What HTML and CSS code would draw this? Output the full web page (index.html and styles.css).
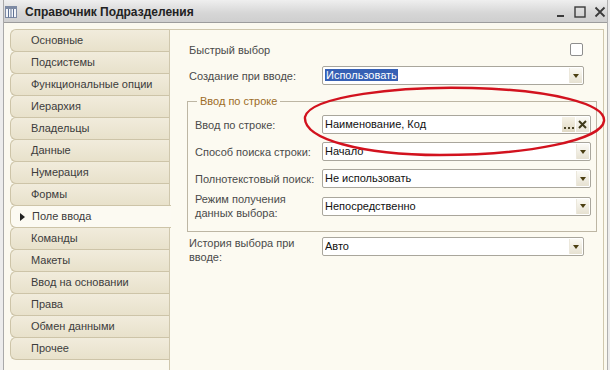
FILE: index.html
```html
<!DOCTYPE html>
<html lang="ru">
<head>
<meta charset="utf-8">
<title>Справочник Подразделения</title>
<link rel="stylesheet" href="styles.css">
</head>
<body>
<div class="window">
  <header class="titlebar">
    <svg class="app-icon" width="12" height="12" viewBox="0 0 12 12">
      <rect x="0.5" y="0.5" width="11" height="11" fill="#f4f6fa" stroke="#7d8aa3"/>
      <line x1="0.5" y1="2" x2="11.5" y2="2" stroke="#7d8aa3" stroke-width="2"/>
      <line x1="3.5" y1="3" x2="3.5" y2="11.5" stroke="#5f7294"/>
      <line x1="6" y1="3" x2="6" y2="11.5" stroke="#5f7294"/>
      <line x1="8.5" y1="3" x2="8.5" y2="11.5" stroke="#5f7294"/>
    </svg>
    <span class="title">Справочник Подразделения</span>
    <div class="controls">
      <svg class="ctl ctl-min" width="10" height="12" viewBox="0 0 10 12"><rect x="1" y="9" width="7" height="2" fill="#3a3a3a"/></svg>
      <svg class="ctl ctl-max" width="12" height="12" viewBox="0 0 12 12"><rect x="1" y="1" width="10" height="10" fill="none" stroke="#3a3a3a" stroke-width="1.4"/></svg>
      <svg class="ctl ctl-close" width="12" height="12" viewBox="0 0 12 12"><path d="M1.5 1.5 L10.5 10.5 M10.5 1.5 L1.5 10.5" stroke="#3a3a3a" stroke-width="1.8"/></svg>
    </div>
  </header>

  <div class="content">
    <nav class="tabs">
      <div class="tab">Основные</div>
      <div class="tab">Подсистемы</div>
      <div class="tab">Функциональные опции</div>
      <div class="tab">Иерархия</div>
      <div class="tab">Владельцы</div>
      <div class="tab">Данные</div>
      <div class="tab">Нумерация</div>
      <div class="tab">Формы</div>
      <div class="tab active"><span class="marker"></span>Поле ввода</div>
      <div class="tab">Команды</div>
      <div class="tab">Макеты</div>
      <div class="tab">Ввод на основании</div>
      <div class="tab">Права</div>
      <div class="tab">Обмен данными</div>
      <div class="tab">Прочее</div>
    </nav>

    <main class="panel">
      <div class="row row-quick">
        <span class="label">Быстрый выбор</span>
        <span class="checkbox"></span>
      </div>
      <div class="row row-create">
        <span class="label">Создание при вводе:</span>
        <div class="field"><span class="value"><span class="selected">Использовать</span></span><span class="dd"></span></div>
      </div>

      <section class="group">
        <div class="legend">Ввод по строке</div>
        <div class="grow">
          <span class="label">Ввод по строке:</span>
          <div class="field"><span class="value">Наименование, Код</span><span class="btn-dots"><i></i><i></i><i></i></span><span class="btn-clear"><svg width="9" height="9" viewBox="0 0 9 9"><path d="M1 1 L8 8 M8 1 L1 8" stroke="#3f3a1c" stroke-width="2"/></svg></span></div>
        </div>
        <div class="grow">
          <span class="label">Способ поиска строки:</span>
          <div class="field"><span class="value">Начало</span><span class="dd"></span></div>
        </div>
        <div class="grow">
          <span class="label">Полнотекстовый поиск:</span>
          <div class="field"><span class="value">Не использовать</span><span class="dd"></span></div>
        </div>
        <div class="grow grow-tall">
          <span class="label">Режим получения<br>данных выбора:</span>
          <div class="field"><span class="value">Непосредственно</span><span class="dd"></span></div>
        </div>
      </section>

      <div class="row row-history">
        <span class="label">История выбора при<br>вводе:</span>
        <div class="field"><span class="value">Авто</span><span class="dd"></span></div>
      </div>
    </main>
  </div>

  <svg class="annotation" width="610" height="370" viewBox="0 0 610 370">
    <path d="M305 117 C 310 96, 400 86, 472 88 C 552 90, 606 104, 604 121 C 602 140, 528 155, 440 155 C 362 155, 303 139, 305 117 Z" fill="none" stroke="#d2121e" stroke-width="2.4" stroke-linejoin="round"/>
  </svg>
</div>
</body>
</html>
```

FILE: styles.css
```css
* { box-sizing: border-box; }

html, body {
  margin: 0;
  padding: 0;
  background: #ececec;
}

body {
  font-family: "Liberation Sans", Arial, sans-serif;
  font-size: 11px;
  color: #4a4a4a;
}

.window {
  position: relative;
  width: 605px;
  height: 370px;
  margin-left: 3px;
  overflow: hidden;
  background: #fbf9ef;
  border-left: 1px solid #a9a9a9;
  border-right: 1px solid #b0b0b0;
}

.titlebar {
  width: 610px;
  height: 23px;
  margin-left: -4px;
  padding: 1px 0 0 5px;
  display: flex;
  align-items: center;
  background: linear-gradient(#efefef, #d6d6d6 60%, #cfcfcf);
  border-bottom: 1px solid #9c9c9c;
}

.app-icon { flex: none; }

.title {
  margin-left: 8px;
  font-size: 12px;
  font-weight: bold;
  color: #222;
}

.controls {
  margin-left: auto;
  display: flex;
  align-items: center;
  gap: 6px;
  padding-right: 4px;
}

.ctl-min { margin-right: 2px; }
.ctl-close { margin-left: 2px; }

.content {
  display: flex;
  align-items: flex-start;
  padding-top: 6px;
  height: 347px;
}

.tabs {
  width: 166px;
  padding-left: 6px;
  flex: none;
}

.tab {
  height: 23px;
  margin-top: -1px;
  padding-left: 20px;
  line-height: 21px;
  color: #3c3c3c;
  background: linear-gradient(#f1ecdc, #e8e1cb);
  border: 1px solid #cdc4a8;
  border-right: none;
  border-radius: 6px 0 0 6px;
  white-space: nowrap;
}

.tab:first-child { margin-top: 0; }

.tab.active {
  position: relative;
  z-index: 1;
  width: 161px;
  background: #fcfaf2;
  padding-left: 9px;
  display: flex;
  align-items: center;
}

.marker {
  width: 0;
  height: 0;
  border-top: 4px solid transparent;
  border-bottom: 4px solid transparent;
  border-left: 5px solid #222;
  margin-right: 7px;
}

.panel {
  width: 435px;
  height: 341px;
  margin-left: -1px;
  padding: 0 19px;
  border: 1px solid #cfc7ad;
  border-bottom: none;
  background: #fcfaf1;
}

.row {
  display: flex;
  align-items: center;
  height: 19px;
}

.label {
  width: 133px;
  flex: none;
  line-height: 14px;
}

.row-quick { margin-top: 10px; }
.row-quick .label { flex: 1; }
.row-create { margin-top: 7px; }

.checkbox {
  width: 13px;
  height: 13px;
  margin-right: 1px;
  border: 1px solid #8e8e8e;
  border-radius: 2px;
  background: #fff;
}

.field {
  flex: 1;
  height: 19px;
  display: flex;
  align-items: center;
  padding-left: 2px;
  background: #fff;
  border: 1px solid #a9a69c;
  border-radius: 2px;
  color: #111;
}

.value {
  flex: 1;
  white-space: nowrap;
  overflow: hidden;
  line-height: 15px;
}

.selected {
  padding: 0 1px;
  background: #3660b4;
  color: #fff;
}

.dd {
  width: 13px;
  height: 15px;
  margin-right: 1px;
  display: flex;
  align-items: center;
  justify-content: center;
  background: linear-gradient(#fbfaf5, #e6e1d1);
  border-left: 1px solid #ece8dc;
}

.dd::after {
  content: "";
  border-left: 3.5px solid transparent;
  border-right: 3.5px solid transparent;
  border-top: 4px solid #4b3f12;
}

.btn-dots {
  width: 13px;
  height: 15px;
  display: flex;
  align-items: flex-end;
  justify-content: center;
  gap: 2px;
  padding-bottom: 3px;
  background: linear-gradient(#f6f2e6, #e0d9c4);
}

.btn-dots i {
  width: 2px;
  height: 2px;
  background: #4a4428;
}

.btn-clear {
  width: 13px;
  height: 15px;
  margin: 0 1px;
  display: flex;
  align-items: center;
  justify-content: center;
  background: linear-gradient(#fbfaf5, #e9e5d7);
}

.group {
  margin: 16px -13px 0 -2px;
  padding: 0 5px 11px 7px;
  border: 1px solid #bdb6a4;
}

.legend {
  width: max-content;
  margin: -8px 0 3px 2px;
  padding: 0 3px;
  line-height: 14px;
  background: #fcfaf1;
  color: #9d6c27;
}

.grow {
  display: flex;
  align-items: center;
  height: 27px;
}

.grow .label { width: 127px; }

.grow-tall { height: 28px; }

.row-history {
  margin-top: 5px;
  align-items: flex-start;
  height: auto;
}

.row-history .label { margin-top: -1px; }

.annotation {
  position: absolute;
  left: -4px;
  top: 0;
  pointer-events: none;
}
```
